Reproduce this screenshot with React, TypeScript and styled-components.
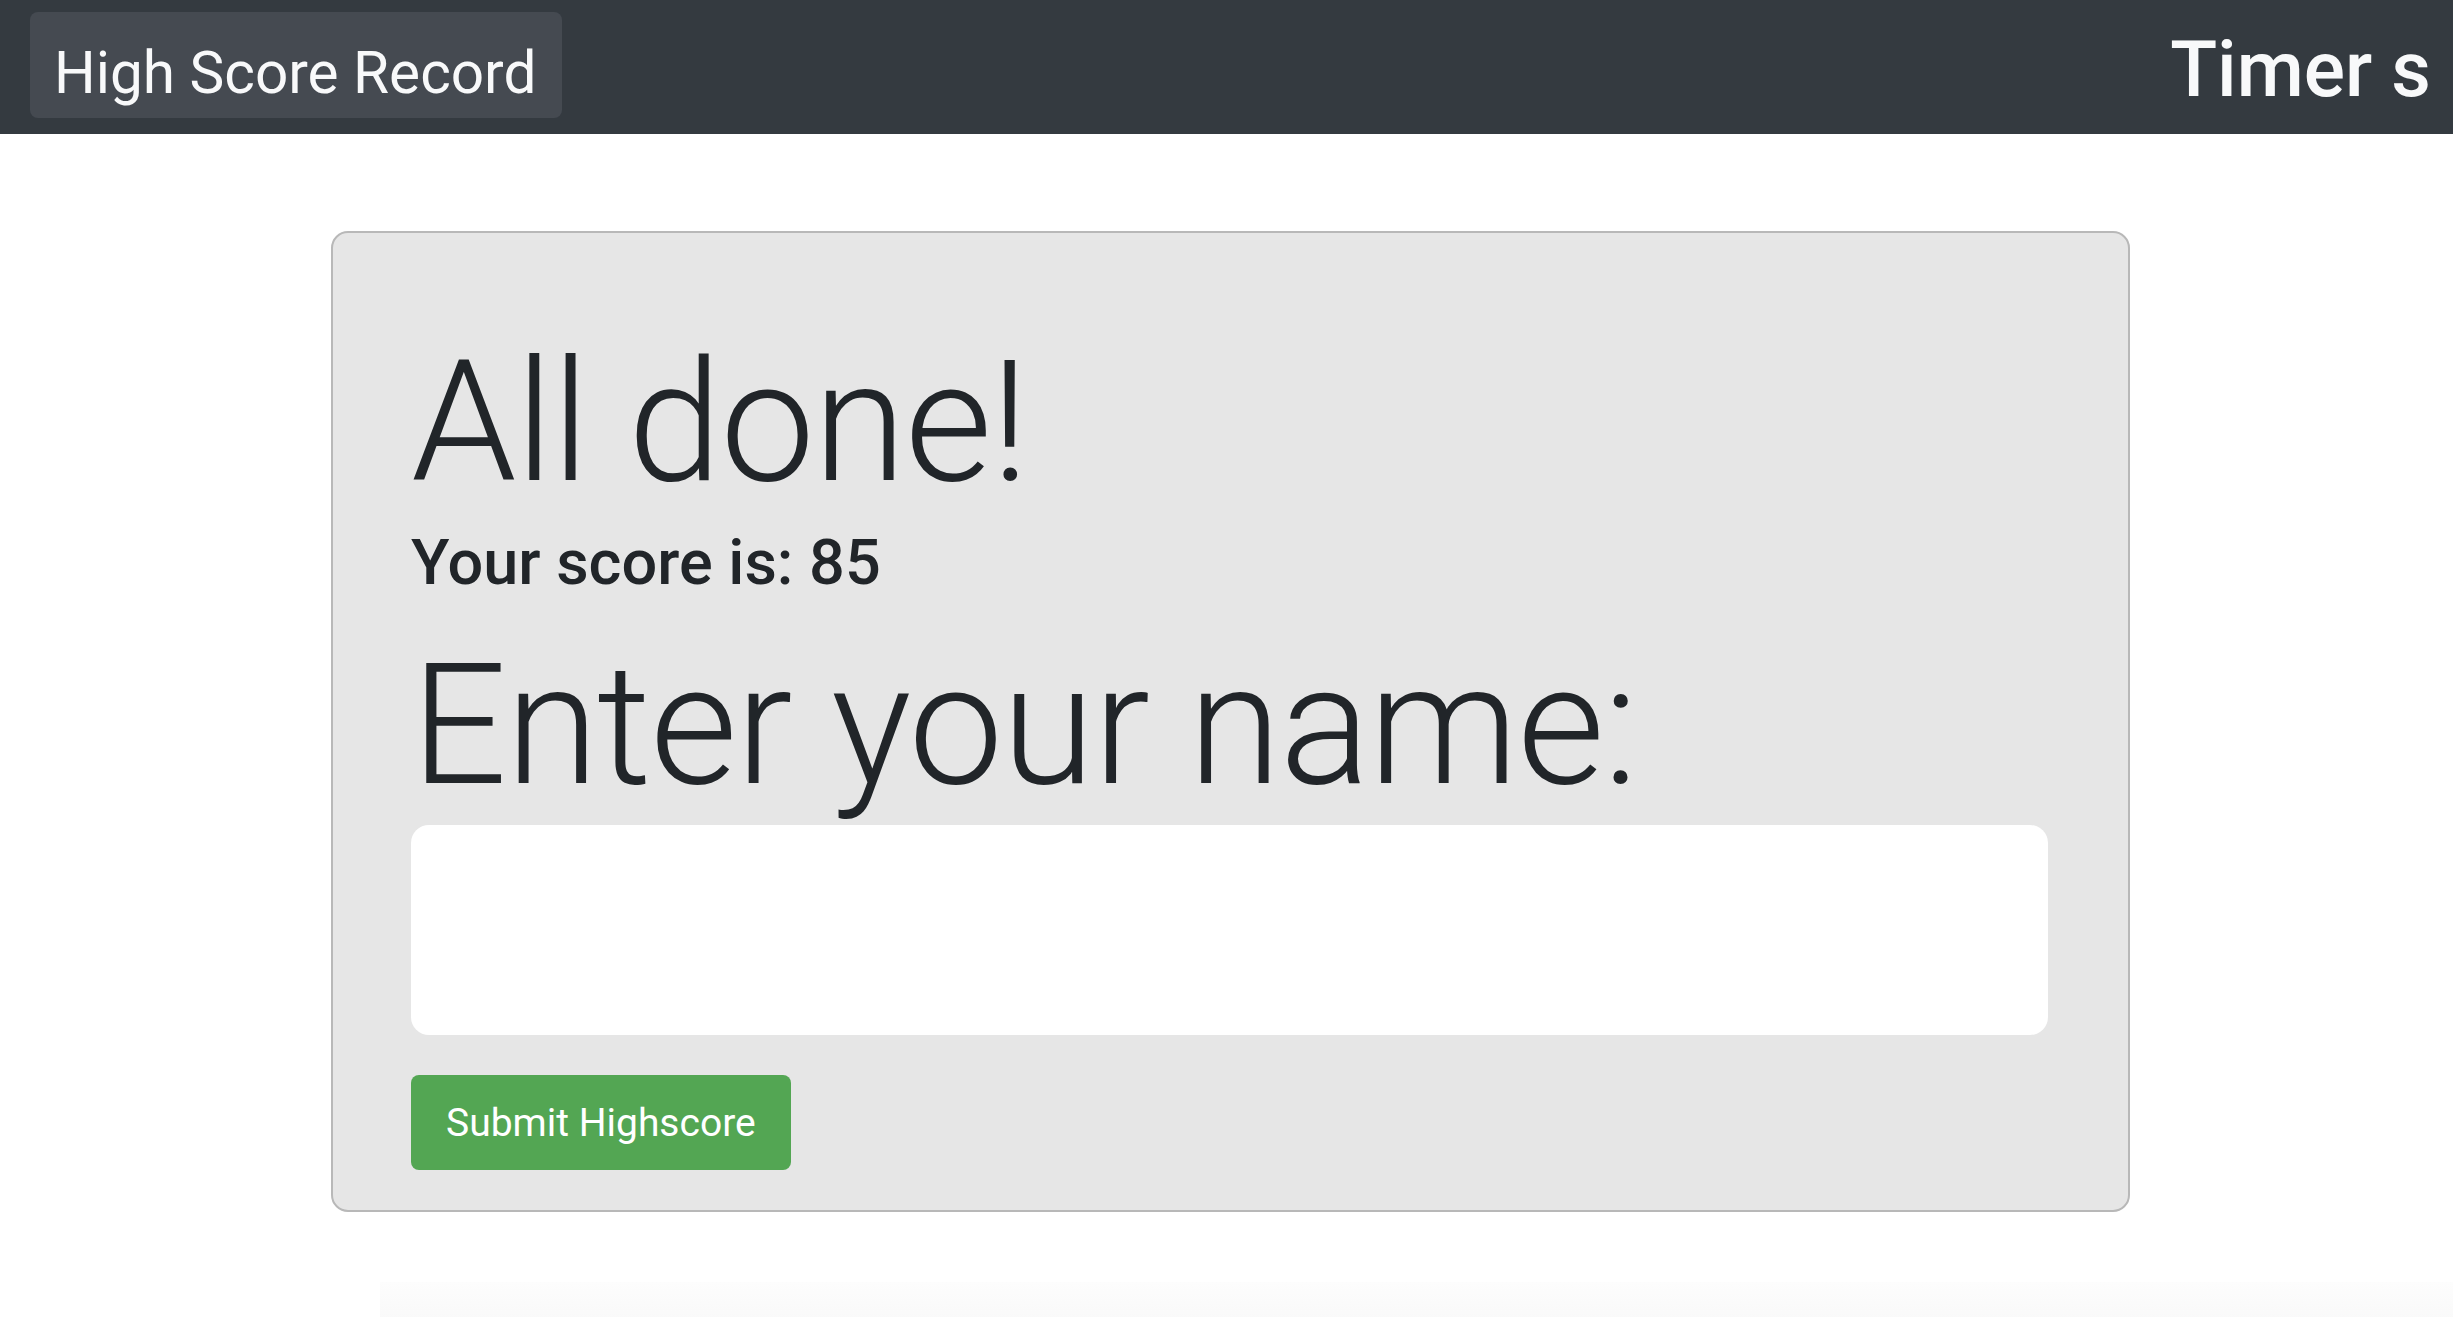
import React from "react";
import styled, { createGlobalStyle } from "styled-components";

const Global = createGlobalStyle`
  html, body {
    margin: 0;
    padding: 0;
    background: #ffffff;
    font-family: Roboto, "Liberation Sans", Arial, sans-serif;
    color: #212529;
  }
  * { box-sizing: border-box; }
`;

const Page = styled.div`
  min-height: 1317px;
  display: flex;
  flex-direction: column;
  overflow: hidden;
`;

const NavBar = styled.nav`
  height: 134px;
  background: #343a40;
  display: flex;
  justify-content: space-between;
  align-items: flex-start;
  padding: 12px 22px 0 30px;
`;

const Brand = styled.a`
  display: block;
  height: 106px;
  width: 532px;
  padding: 25px 0 0 24px;
  background: #454a51;
  border-radius: 8px;
  color: #f8f9fa;
  font-size: 58.5px;
  line-height: 72px;
  font-weight: 400;
  white-space: nowrap;
  text-decoration: none;
`;

const Timer = styled.div`
  margin-top: 9px;
  color: #f8f9fa;
  font-size: 77px;
  line-height: 98px;
  font-weight: 500;
  white-space: nowrap;
`;

const Main = styled.main`
  padding: 97px 323px 0 331px;
`;

const Card = styled.section`
  background: #e6e6e6;
  border: 2px solid #b8b8b8;
  border-radius: 17px;
  padding: 94px 80px 40px 78px;
  display: flex;
  flex-direction: column;
  align-items: flex-start;
`;

const Display = styled.h1<{ $gap?: number }>`
  margin: ${(p) => p.$gap ?? 0}px 0 0 0;
  font-size: 169px;
  line-height: 191px;
  font-weight: 300;
  letter-spacing: -1.5px;
  white-space: nowrap;
`;

const Score = styled.h3`
  margin: 6px 0 0 0;
  font-size: 63px;
  line-height: 78px;
  font-weight: 500;
  white-space: nowrap;
`;

const NameInput = styled.input`
  margin-top: 4px;
  width: 100%;
  height: 210px;
  border: none;
  border-radius: 18px;
  background: #ffffff;
  font-size: 60px;
  padding: 0 30px;
  outline: none;
`;

const SubmitButton = styled.button`
  margin-top: 40px;
  height: 95px;
  padding: 0 35px;
  border: none;
  border-radius: 8px;
  background: #53a653;
  color: #ffffff;
  font-family: inherit;
  font-size: 39px;
  line-height: 60px;
  cursor: pointer;
`;

const Fade = styled.div`
  margin: 70px 0 0 380px;
  height: 40px;
  background: linear-gradient(to bottom, #fdfdfd, #f9f9f9);
`;

export default function App() {
  return (
    <Page>
      <Global />
      <NavBar>
        <Brand href="#">High Score Record</Brand>
        <Timer>Timer s</Timer>
      </NavBar>
      <Main>
        <Card>
          <Display>All done!</Display>
          <Score>Your score is: 85</Score>
          <Display $gap={28}>Enter your name:</Display>
          <NameInput type="text" aria-label="name" />
          <SubmitButton>Submit Highscore</SubmitButton>
        </Card>
      </Main>
      <Fade />
    </Page>
  );
}
